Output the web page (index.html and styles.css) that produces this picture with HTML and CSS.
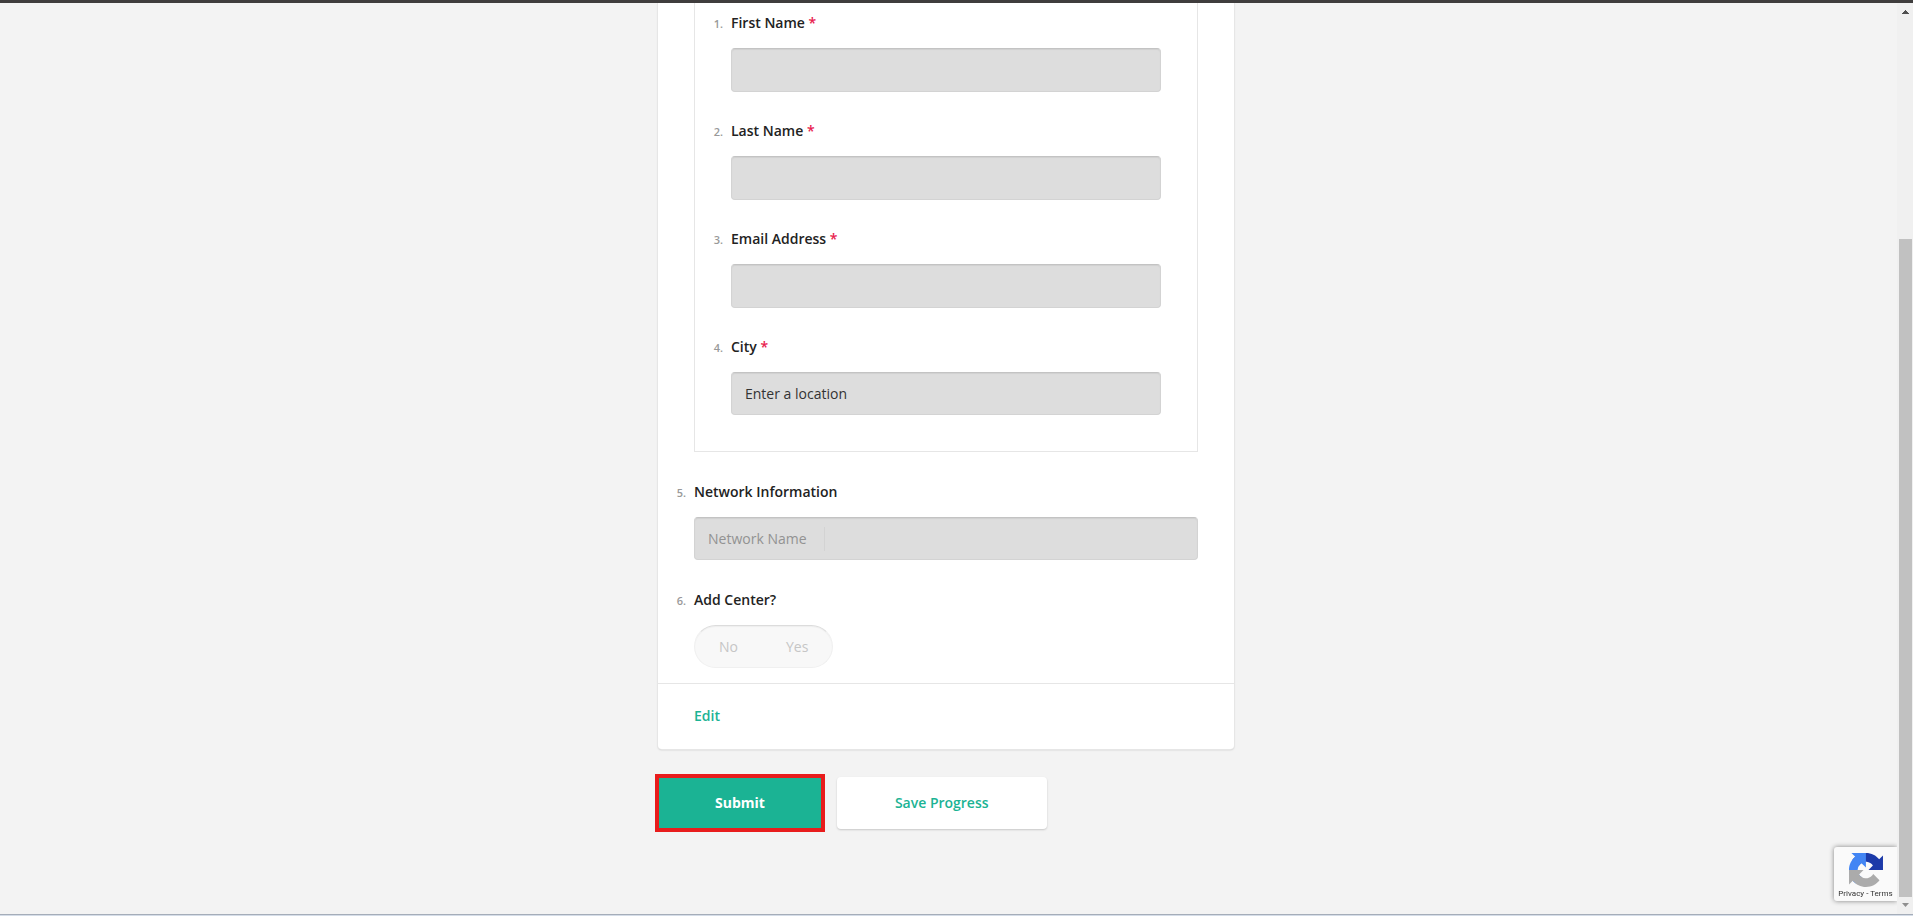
FILE: index.html
```
<!DOCTYPE html>
<html lang="en">
<head>
  <meta charset="UTF-8">
  <meta name="viewport" content="width=device-width, initial-scale=1.0">
  <title>Network Form</title>
  <link rel="stylesheet" href="styles.css">
</head>
<body>
  <div class="topbar"></div>
  <div class="window">
    <main class="page">
      <form class="form">
        <div class="card">
          <div class="card-body">
            <div class="group">
              <div class="field">
                <label class="label" for="first-name"><span class="num">1.</span>First Name <span class="req">*</span></label>
                <div class="slot"><input class="input" type="text" id="first-name"></div>
              </div>
              <div class="field">
                <label class="label" for="last-name"><span class="num">2.</span>Last Name <span class="req">*</span></label>
                <div class="slot"><input class="input" type="text" id="last-name"></div>
              </div>
              <div class="field">
                <label class="label" for="email"><span class="num">3.</span>Email Address <span class="req">*</span></label>
                <div class="slot"><input class="input" type="email" id="email"></div>
              </div>
              <div class="field">
                <label class="label" for="city"><span class="num">4.</span>City <span class="req">*</span></label>
                <div class="slot"><input class="input short" type="text" id="city" placeholder="Enter a location"></div>
              </div>
            </div>
            <div class="field">
              <div class="label"><span class="num">5.</span>Network Information</div>
              <div class="slot">
                <div class="input short combo">
                  <label class="prefix" for="network-name">Network Name</label>
                  <input class="bare" type="text" id="network-name">
                </div>
              </div>
            </div>
            <div class="field">
              <div class="label" id="center-label"><span class="num">6.</span>Add Center?</div>
              <div class="slot">
                <div class="toggle" role="radiogroup" aria-labelledby="center-label">
                  <label class="option"><input type="radio" name="center" value="no">No</label>
                  <label class="option"><input type="radio" name="center" value="yes">Yes</label>
                </div>
              </div>
            </div>
          </div>
          <div class="card-footer">
            <a class="edit" href="#">Edit</a>
          </div>
        </div>
        <div class="actions">
          <button class="btn submit" type="submit">Submit</button>
          <button class="btn save" type="button">Save Progress</button>
        </div>
      </form>
    </main>
    <div class="scrollbar">
      <svg class="arrow" width="7" height="4" viewBox="0 0 7 4"><path d="M0 4V3H1V2H2V1H3V0H4V1H5V2H6V3H7V4Z" fill="#505050"/></svg>
      <div class="thumb"></div>
      <svg class="arrow" width="7" height="4" viewBox="0 0 7 4"><path d="M0 0H7L3.5 4Z" fill="#8f8f8f"/></svg>
    </div>
  </div>
  <div class="bottombar"></div>

  <div class="captcha">
    <svg class="captcha-logo" width="34" height="34" viewBox="0 0 64 64">
      <path d="M64 31.955a33 33 0 0 0-.037-1.38V4.687l-7.157 7.157C50.948 4.674 42.033.093 32.05.093c-10.389 0-19.622 4.96-25.458 12.64l11.73 11.855a15.55 15.55 0 0 1 4.754-5.334c2.05-1.6 4.952-2.906 8.968-2.906.485 0 .86.057 1.135.163 4.976.393 9.288 3.14 11.828 7.124l-8.307 8.307L64 31.953" fill="#1c3aa9"/>
      <path d="M31.862.094a33 33 0 0 0-1.38.037H4.594l7.157 7.157C4.58 13.147 0 22.06 0 32.046c0 10.388 4.96 19.622 12.64 25.458l11.855-11.73a15.55 15.55 0 0 1-5.334-4.754c-1.6-2.05-2.906-4.952-2.906-8.968 0-.485.057-.86.163-1.135.393-4.976 3.14-9.288 7.124-11.828l8.307 8.307L31.86.095" fill="#4285f4"/>
      <path d="M.001 32.045a33 33 0 0 0 .037 1.38v25.888l7.157-7.157c5.858 7.17 14.773 11.75 24.756 11.75 10.388 0 19.622-4.96 25.458-12.64l-11.73-11.855a15.55 15.55 0 0 1-4.754 5.334c-2.05 1.6-4.952 2.906-8.968 2.906-.485 0-.86-.057-1.135-.163-4.976-.393-9.288-3.14-11.828-7.124l8.307-8.307-27.3-.012" fill="#ababab"/>
    </svg>
    <div class="captcha-links"><a href="#">Privacy</a> - <a href="#">Terms</a></div>
  </div>
</body>
</html>
```
FILE: styles.css
```
* {
  box-sizing: border-box;
}
body {
  margin: 0;
  height: 100vh;
  display: flex;
  flex-direction: column;
  overflow: hidden;
  background: #f3f3f3;
  color: #222;
  font-family: "Open Sans", "Noto Sans", sans-serif;
  font-size: 14px;
  line-height: 24px;
}
.topbar {
  flex: none;
  height: 3px;
  background: #3f3d3d;
  z-index: 1;
}
.bottombar {
  flex: none;
  height: 2px;
  background: #d5dde8;
  border-top: 1px solid #a5adb9;
}
.window {
  flex: 1;
  min-height: 0;
  display: flex;
}
.page {
  flex: 1;
  padding: 0 5px 0 0;
}
.form {
  max-width: 576px;
  margin: 0 auto;
}

/* card */
.card {
  background: #fff;
  border-radius: 0 0 4px 4px;
  box-shadow: 0 0 0 1px #e6e6e6, 0 1px 2px rgba(0, 0, 0, 0.2);
}
.card-body {
  padding: 0 36px 14px;
}
.card-footer {
  padding: 20px 36px 21px;
  border-top: 1px solid #e6e6e6;
}
.group {
  margin-bottom: 28px;
  padding: 8px 36px 35px;
  border: 1px solid #e6e6e6;
  border-top: 0;
}
.field + .field {
  margin-top: 27px;
}
.label {
  display: block;
  margin-bottom: 13px;
  font-weight: 600;
}
.num {
  display: inline-block;
  width: 24px;
  margin-left: -24px;
  padding-right: 8px;
  color: #999;
  font-size: 11px;
  line-height: 12px;
  text-align: right;
}
.req {
  color: #e8204e;
}
.slot {
  height: 44px;
}
.input {
  display: block;
  width: 100%;
  height: 44px;
  padding: 0 13px;
  border: 1px solid #d3d3d3;
  border-top-color: #c3c3c3;
  border-radius: 4px;
  background: #ddd;
  box-shadow: inset 0 1px 1px rgba(0, 0, 0, 0.06);
  color: #333;
  font: inherit;
}
.input::placeholder {
  color: #333;
  opacity: 1;
}
.short {
  height: 43px;
}
.combo {
  display: flex;
  align-items: center;
}
.prefix {
  padding-right: 17px;
  border-right: 1px solid #d3d3d3;
  color: #929292;
}
.bare {
  flex: 1;
  min-width: 0;
  border: 0;
  background: none;
  font: inherit;
}

/* yes / no switch */
.toggle {
  display: inline-flex;
  height: 43px;
  border: 1px solid #f0f0f0;
  border-top-color: #dcdcdc;
  border-radius: 22px;
  background: #f8f8f8;
  box-shadow: inset 0 1px 1px rgba(0, 0, 0, 0.04);
  color: #c6c6c6;
}
.option {
  padding: 9px 24px;
}
.option input {
  position: absolute;
  opacity: 0;
}

.edit {
  color: #1bb394;
  font-weight: 600;
  text-decoration: none;
}
.actions {
  display: flex;
  align-items: center;
  gap: 12px;
  margin: 25px 0 0 -3px;
}
.btn {
  border: 0;
  border-radius: 4px;
  font: inherit;
  font-weight: 600;
}
.submit {
  height: 58px;
  padding: 0 56px;
  border: 4px solid #e81c1c;
  border-radius: 0;
  background: #1bb394;
  color: #fff;
  font-weight: 700;
}
.save {
  height: 52px;
  padding: 0 58px;
  background: #fff;
  box-shadow: 0 1px 2px rgba(0, 0, 0, 0.18);
  color: #1bb394;
}

/* scrollbar */
.scrollbar {
  flex: none;
  width: 16px;
  display: flex;
  flex-direction: column;
  align-items: center;
  padding: 7px 1px 7px 2px;
  background: #f0f0f0;
}
.arrow {
  flex: none;
}
.thumb {
  width: 13px;
  flex: 1;
  margin: 225px 0 6px;
  background: #c1c1c1;
}

/* recaptcha badge */
.captcha {
  position: fixed;
  right: 16px;
  bottom: 15px;
  width: 63px;
  height: 54px;
  padding-top: 6px;
  border-radius: 3px 0 0 3px;
  background: #fafafa;
  box-shadow: 0 0 5px gray;
  clip-path: inset(-8px 0 -8px -8px);
  text-align: center;
}
.captcha-logo {
  display: block;
  margin: 0 auto;
}
.captcha-links {
  font-family: Roboto, sans-serif;
  font-size: 8px;
  line-height: 14px;
  white-space: nowrap;
}
.captcha-links a {
  color: #333;
  text-decoration: none;
}
```
